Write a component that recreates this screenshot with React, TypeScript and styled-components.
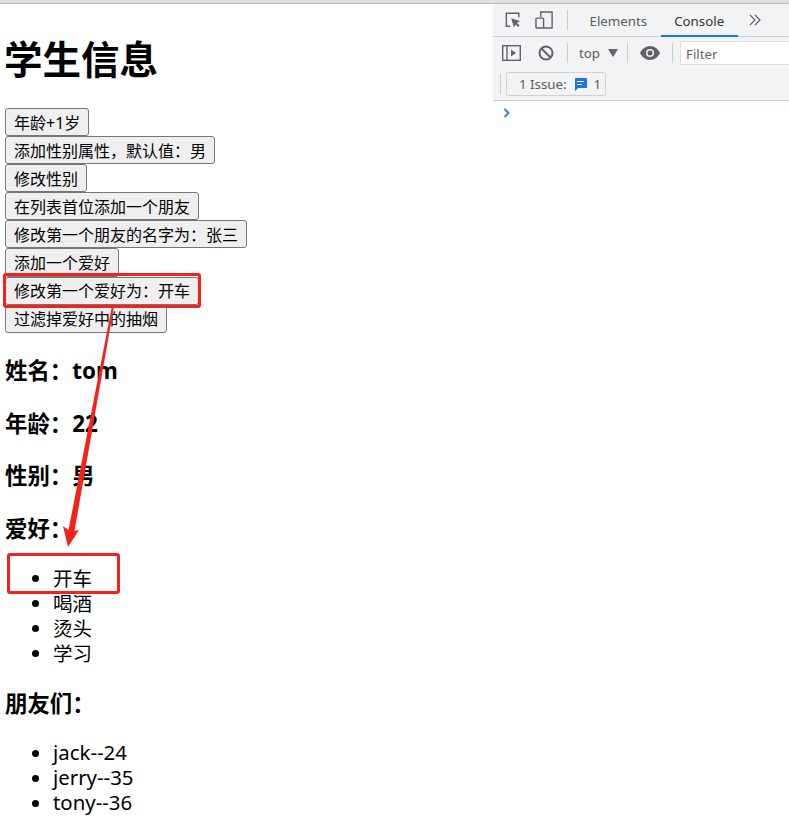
import React from "react";
import styled, { createGlobalStyle } from "styled-components";

const Global = createGlobalStyle`
  html, body { margin: 0; padding: 0; background: #fff; }
  body { font-family: "Noto Sans", "Noto Sans CJK SC", sans-serif; color: #000; }
`;
const Page = styled.div`
  position: relative; width: 789px; height: 831px; overflow: hidden;
  border-top: 3px solid #dedede; box-sizing: border-box; box-shadow: inset 0 1px 0 #bdbdbd;
  display: grid; grid-template-columns: 493px 296px;
`;
const Main = styled.main`padding-left: 5px;`;
const Title = styled.h1`
  margin: 0 0 0 -1px; padding-top: 31px; height: 74px;
  font: 700 38.5px/47px "Noto Sans CJK SC", sans-serif;
`;
const Actions = styled.div`display: flex; flex-direction: column; align-items: flex-start; margin-bottom: 2.2px;`;
const Action = styled.button`
  height: 28.1px; padding: 1px 8px 0; box-sizing: border-box; background: #efefef;
  border: 1px solid #767676; border-radius: 3px; color: #000;
  font: 400 16px/24px "Noto Sans", "Noto Sans CJK SC", sans-serif; white-space: nowrap;
`;
const Field = styled.h3`
  margin: 0; height: 52.7px; padding-top: 20px; box-sizing: border-box;
  font: 700 22.4px/32px "Noto Sans", "Noto Sans CJK SC", sans-serif;
`;
const List = styled.ul<{ $gap: number; $size: number }>`
  margin: ${p => p.$gap}px 0 2px; padding: 0 0 0 48px;
  font: 400 ${p => p.$size}px/25px "Noto Sans", "Noto Sans CJK SC", sans-serif;
`;
const Tools = styled.aside`
  font: 400 13.3px/16px "Noto Sans", "Open Sans", sans-serif; color: #5a5a5a;
  display: flex; flex-direction: column; height: 100%; padding-top: 1px; box-sizing: border-box;
`;
const Bar = styled.div<{ $h: number; $line?: boolean; $pt?: number }>`
  height: ${p => p.$h}px; box-sizing: border-box; background: #f1f3f4; padding-top: ${p => p.$pt ?? 0}px;
  border-bottom: ${p => (p.$line ? "1px solid #cbcdd1" : "0")}; display: flex; align-items: center; flex: none;
`;
const Divider = styled.span`width: 1px; height: 20px; background: #ccc; flex: none;`;
const Tab = styled.span<{ $active?: boolean }>`
  height: 100%; display: flex; align-items: center; padding: 2px 13.5px 0; box-sizing: border-box;
  color: ${p => (p.$active ? "#333" : "#5a5a5a")};
  border-bottom: 2px solid ${p => (p.$active ? "#1a73e8" : "transparent")};
  margin-bottom: -1px;
`;
const IconSlot = styled.span<{ $ml: number }>`margin-left: ${p => p.$ml}px; display: flex; flex: none;`;
const Filter = styled.span`
  flex: 1; height: 24px; margin-left: 7px; background: #fff; border: 1px solid #dadce0;
  border-right: 0; padding-left: 5px; color: #666; box-sizing: border-box; line-height: 24px;
`;
const Top = styled.span`margin-left: 11px; display: flex; align-items: center; gap: 8px;`;
const Issue = styled.span`
  margin-left: 5px; height: 24px; width: 100px; box-sizing: border-box;
  border: 1px solid #cfd1d5; border-radius: 2px; display: flex; align-items: center;
  padding-left: 12px; gap: 7px;
`;
const Console = styled.div`background: #fff; padding: 4px 0 0 10px; height: 20px;`;
const Mark = styled.div<{ $x: number; $y: number; $w: number; $h: number }>`
  position: absolute; left: ${p => p.$x}px; top: ${p => p.$y}px; width: ${p => p.$w}px; height: ${p => p.$h}px;
  box-sizing: border-box; border: 3px solid #f5221b; border-radius: 3px;
`;
const Arrow = styled.svg`position: absolute; left: 0; top: -3px; pointer-events: none;`;

const buttons = ["年龄+1岁","添加性别属性，默认值：男","修改性别","在列表首位添加一个朋友","修改第一个朋友的名字为：张三","添加一个爱好","修改第一个爱好为：开车","过滤掉爱好中的抽烟"];

export default function App() {
  return (
    <Page>
      <Global />
      <Main>
        <Title>学生信息</Title>
        <Actions>{buttons.map(b => <Action key={b}>{b}</Action>)}</Actions>
        <Field>姓名：tom</Field>
        <Field>年龄：22</Field>
        <Field>性别：男</Field>
        <Field>爱好：</Field>
        <List $gap={20} $size={19.5}><li>开车</li><li>喝酒</li><li>烫头</li><li>学习</li></List>
        <Field>朋友们：</Field>
        <List $gap={20} $size={20.4}><li>jack--24</li><li>jerry--35</li><li>tony--36</li></List>
      </Main>
      <Tools>
        <Bar $h={33} $line>
          <IconSlot $ml={12}>
            <svg width="16" height="16" viewBox="0 0 18 18" fill="none" stroke="#5f6368" strokeWidth="1.6"><path d="M6 16H1.500V1.500h14V6"/><path d="M7 7l10 3.500-3.700 1.800 3.200 3-1.700 1.700-3-3L10 17.500z" fill="#5f6368" stroke="none"/></svg>
          </IconSlot>
          <IconSlot $ml={14}>
            <svg width="19" height="20" viewBox="0 0 20 20" fill="none" stroke="#5f6368" strokeWidth="1.5"><path d="M6 7V1.500h12v17H9"/><rect x="1" y="8" width="8" height="10.500" rx="1"/></svg>
          </IconSlot>
          <IconSlot $ml={13}><Divider /></IconSlot>
          <IconSlot $ml={8}><Tab>Elements</Tab></IconSlot>
          <Tab $active>Console</Tab>
          <IconSlot $ml={11}>
            <svg width="12" height="12" viewBox="0 0 12 12" fill="none" stroke="#5f6368" strokeWidth="1.2"><path d="M1 1l5 5-5 5M6 1l5 5-5 5"/></svg>
          </IconSlot>
        </Bar>
        <Bar $h={30} $pt={2}>
          <IconSlot $ml={9}>
            <svg width="19" height="16" viewBox="0 0 19 16" fill="none" stroke="#5f6368" strokeWidth="1.4"><rect x=".7" y=".7" width="17.6" height="14.6"/><path d="M5 1v14"/><path d="M9 4.500l5 3.500-5 3.500z" fill="#5f6368" stroke="none"/></svg>
          </IconSlot>
          <IconSlot $ml={17}>
            <svg width="16" height="16" viewBox="0 0 16 16" fill="none" stroke="#5f6368" strokeWidth="2"><circle cx="8" cy="8" r="6.500"/><path d="M3.500 3.500l9 9"/></svg>
          </IconSlot>
          <IconSlot $ml={13}><Divider /></IconSlot>
          <Top>top
            <svg width="10" height="8" viewBox="0 0 10 8"><path d="M0 0h10L5 8z" fill="#5f6368"/></svg>
          </Top>
          <IconSlot $ml={9}><Divider /></IconSlot>
          <IconSlot $ml={12}>
            <svg width="20" height="14" viewBox="0 0 20 14"><path d="M10 0C5.500 0 2 3 0 7c2 4 5.500 7 10 7s8-3 10-7c-2-4-5.500-7-10-7z" fill="#5f6368"/><circle cx="10" cy="7" r="4" fill="#f1f3f4"/><circle cx="10" cy="7" r="2.500" fill="#5f6368"/></svg>
          </IconSlot>
          <IconSlot $ml={12}><Divider /></IconSlot>
          <Filter>Filter</Filter>
        </Bar>
        <Bar $h={34} $line $pt={1}>
          <IconSlot $ml={7}><Divider /></IconSlot>
          <Issue>1 Issue:
            <svg width="13" height="13" viewBox="0 0 13 13"><path d="M1 0h11a1 1 0 0 1 1 1v8a1 1 0 0 1-1 1H4l-3 3z" fill="#1a73e8"/><path d="M3 3.500h7M3 6.500h5" stroke="#fff" strokeWidth="1"/></svg>
            1</Issue>
        </Bar>
        <Console>
          <svg width="8" height="10" viewBox="0 0 8 10" fill="none" stroke="#3b78e7" strokeWidth="2"><path d="M1.500 1l4 4-4 4"/></svg>
        </Console>
      </Tools>
      <Mark $x={3} $y={270} $w={198} $h={35} />
      <Mark $x={7} $y={550} $w={113} $h={41} />
      <Arrow width="789" height="834">
        <path d="M112 306 L68.500 530 L63 526 L68 547 L79 530 L74.500 531 L114 306z" fill="#f5221b"/>
      </Arrow>
    </Page>
  );
}
